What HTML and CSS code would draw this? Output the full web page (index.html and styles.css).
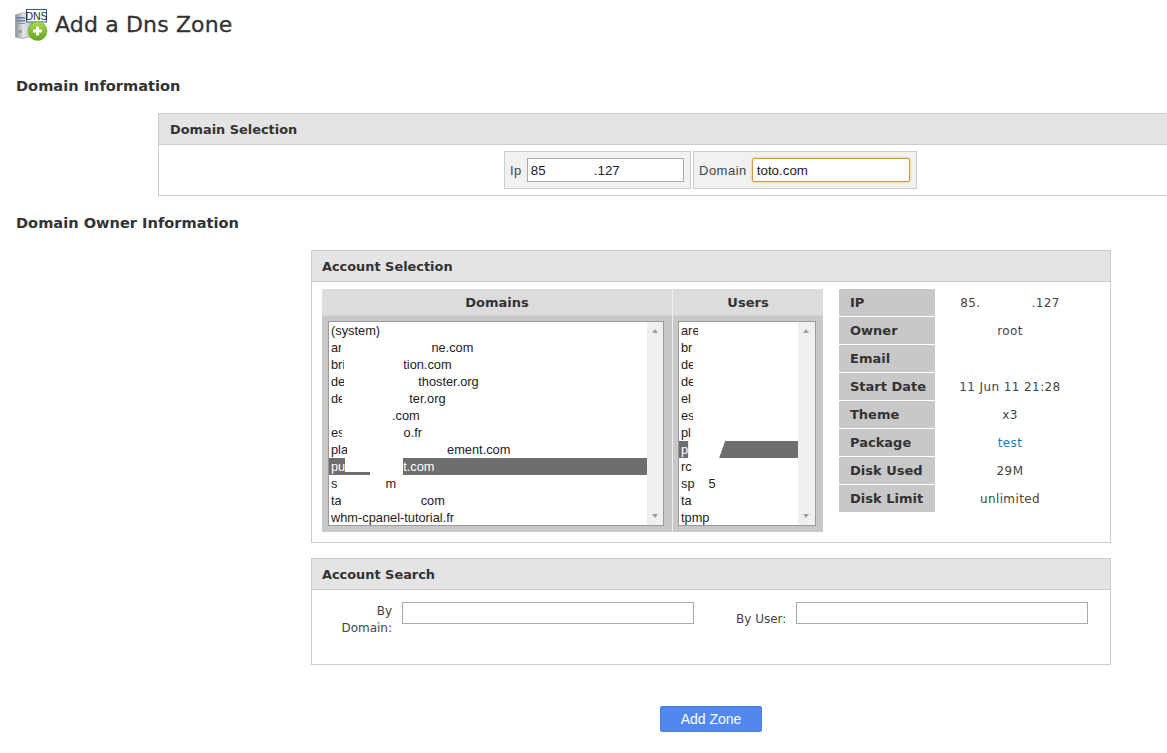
FILE: index.html
```html
<!DOCTYPE html>
<html lang="en">
<head>
<meta charset="utf-8">
<title>Add a Dns Zone</title>
<link rel="stylesheet" href="styles.css">
</head>
<body>
<main class="page">
  <header class="title-row">
    <svg class="title-icon" width="33" height="32" viewBox="0 0 33 32">
      <defs>
        <linearGradient id="tower" x1="0" x2="1" y1="0" y2="0"><stop offset="0" stop-color="#8d9299"/><stop offset="0.45" stop-color="#e4e6ea"/><stop offset="1" stop-color="#b4b8bd"/></linearGradient>
        <linearGradient id="green" x1="0" x2="0" y1="0" y2="1"><stop offset="0" stop-color="#a9da4c"/><stop offset="1" stop-color="#5ea51b"/></linearGradient>
      </defs>
      <path d="M0.5 6 L7 4 H18 V27 L7 29.5 L0.5 28 Z" fill="url(#tower)" stroke="#8b8f95" stroke-width="0.6"/>
      <rect x="2" y="8" width="8" height="1.6" fill="#5b7fa8"/>
      <rect x="2" y="11" width="8" height="1.6" fill="#6f86a0"/>
      <rect x="2" y="14" width="8" height="1" fill="#8b939c"/>
      <rect x="3" y="21" width="4" height="3" fill="#9aa0a6"/>
      <rect x="11.5" y="0.5" width="20" height="12.5" fill="#fff" stroke="#2f5f9e"/>
      <text x="21.5" y="11" text-anchor="middle" class="icon-text">DNS</text>
      <circle cx="22.5" cy="22" r="9.5" fill="url(#green)" stroke="#6aa820" stroke-width="0.6"/>
      <path d="M22.5 17.5 V26.5 M18 22 H27" stroke="#fff" stroke-width="3"/>
    </svg>
    <h1 class="title">Add a Dns Zone</h1>
  </header>

  <h2 class="section first">Domain Information</h2>
  <section class="panel panel-domain">
    <h3 class="panel-head">Domain Selection</h3>
    <div class="domain-body">
      <label class="field field-ip">Ip <input class="text ip" type="text" value="85             .127"></label>
      <label class="field field-domain">Domain <input class="text focused" type="text" value="toto.com"></label>
    </div>
  </section>

  <h2 class="section second">Domain Owner Information</h2>
  <section class="panel panel-owner">
    <h3 class="panel-head inset">Account Selection</h3>
    <div class="account-body">
      <div class="picker">
        <div class="picker-col col-domains">
          <div class="picker-head">Domains</div>
          <div class="picker-well">
            <div class="listbox">
              <ul class="list">
                <li>(system)</li>
                <li>ar<span class="gap g1"></span>ne.com</li>
                <li>bri<span class="gap g2"></span>tion.com</li>
                <li>de<span class="gap g3"></span>thoster.org</li>
                <li>de<span class="gap g4"></span>ter.org</li>
                <li><span class="gap g5"></span>.com</li>
                <li>es<span class="gap g6"></span>o.fr</li>
                <li>pla<span class="gap g7"></span>ement.com</li>
                <li class="sel">pu<span class="cover c1"></span>t.com</li>
                <li>s<span class="gap g8"></span>m</li>
                <li>ta<span class="gap g9"></span>com</li>
                <li>whm-cpanel-tutorial.fr</li>
              </ul>
              <div class="scrollbar"><span class="arrow up"></span><span class="arrow down"></span></div>
            </div>
          </div>
        </div>
        <div class="picker-col col-users">
          <div class="picker-head">Users</div>
          <div class="picker-well">
            <div class="listbox">
              <ul class="list">
                <li>are<span class="gap mask"></span></li>
                <li>bri<span class="gap mask"></span></li>
                <li>de<span class="gap mask"></span></li>
                <li>de<span class="gap mask"></span></li>
                <li>el</li>
                <li>es<span class="gap mask"></span></li>
                <li>pl</li>
                <li class="sel">p<span class="cover c2"></span></li>
                <li>rc</li>
                <li>sp<span class="gap g10"></span>5</li>
                <li>ta</li>
                <li>tpmp</li>
              </ul>
              <div class="scrollbar"><span class="arrow up"></span><span class="arrow down"></span></div>
            </div>
          </div>
        </div>
      </div>
      <dl class="info">
        <div class="info-row"><dt>IP</dt><dd>85.<span class="gap g11"></span>.127</dd></div>
        <div class="info-row"><dt>Owner</dt><dd>root</dd></div>
        <div class="info-row"><dt>Email</dt><dd></dd></div>
        <div class="info-row"><dt>Start Date</dt><dd>11 Jun 11 21:28</dd></div>
        <div class="info-row"><dt>Theme</dt><dd>x3</dd></div>
        <div class="info-row"><dt>Package</dt><dd><a class="link" href="#">test</a></dd></div>
        <div class="info-row"><dt>Disk Used</dt><dd>29M</dd></div>
        <div class="info-row"><dt>Disk Limit</dt><dd>unlimited</dd></div>
      </dl>
    </div>
  </section>

  <section class="panel panel-search">
    <h3 class="panel-head inset">Account Search</h3>
    <div class="search-body">
      <label class="search-label label-domain" for="by-domain">By Domain:</label>
      <input class="text search-input" id="by-domain" type="text">
      <label class="search-label label-user" for="by-user">By User:</label>
      <input class="text search-input" id="by-user" type="text">
    </div>
  </section>

  <div class="actions"><button class="btn" type="button">Add Zone</button></div>
</main>
</body>
</html>
```
FILE: styles.css
```css
* { box-sizing: border-box; }
html, body { margin: 0; padding: 0; }
body {
  background: #fff;
  color: #333;
  font-family: "DejaVu Sans", Verdana, sans-serif;
  overflow: hidden;
  height: 753px;
}
.page { padding: 10px 0 0 16px; }
.title-row { display: flex; align-items: center; gap: 7px; height: 30px; }
.title-icon { flex: none; margin-left: -1px; }
.icon-text { font: 10.5px "Liberation Sans", Arial, sans-serif; fill: #1c2b4a; -webkit-text-stroke: 0.2px #1c2b4a; }
.title { margin: 0; font-size: 22px; font-weight: 400; color: #333; letter-spacing: 0.15px; line-height: 30px; -webkit-text-stroke: 0.3px #333; }
.section { margin: 0; font-size: 14.6px; font-weight: 700; line-height: 20px; color: #333; }
.section.first { padding-top: 36px; height: 73px; }
.section.second { margin-top: 17px; height: 37px; }

.panel { border: 1px solid #ccc; background: #fff; }
.panel-head {
  margin: 0;
  height: 31px;
  padding-left: 11px;
  background: #e4e4e4;
  border-bottom: 1px solid #ccc;
  font-size: 12.9px;
  font-weight: 700;
  line-height: 32px;
  color: #333;
}
.panel-head.inset { padding-left: 10px; }
.panel-domain { margin-left: 142px; width: 1030px; height: 83px; }
.panel-owner { margin-left: 295px; width: 800px; height: 293px; }
.panel-search { margin: 15px 0 0 295px; width: 800px; height: 107px; }

.domain-body { display: flex; justify-content: flex-start; gap: 2px; padding: 6px 0 0 345px; }
.field {
  display: flex;
  align-items: center;
  gap: 5px;
  height: 38px;
  padding: 0 5px;
  background: #f1f1f1;
  border: 1px solid #ccc;
  font: 13px "Liberation Sans", Arial, sans-serif;
  letter-spacing: 0.5px;
  color: #444;
}
.field-ip { width: 187px; }
.field-domain { width: 224px; }
.text {
  height: 24px;
  border: 1px solid #aaa;
  background: #fff;
  padding: 1px 3px;
  font: 13.33px "Liberation Sans", Arial, sans-serif;
  color: #222;
  outline: none;
}
.ip { width: 157px; }
.focused { width: 158px; padding-left: 4px; border-color: #d39a3a; border-radius: 2px; box-shadow: 0 0 2px #e5a83a; color: #222; }

.account-body { display: flex; gap: 16px; padding: 7px 0 0 10px; }
.picker { display: flex; width: 501px; height: 243px; }
.picker-col { display: flex; flex-direction: column; }
.col-domains { width: 350px; }
.col-users { width: 151px; border-left: 1px solid #eee; }
.picker-head {
  height: 27px;
  background: #dcdcdc;
  border-bottom: 1px solid #d4d4d4;
  text-align: center;
  font-size: 13px;
  font-weight: 700;
  line-height: 28px;
  color: #333;
}
.picker-well { flex: 1; background: #c8c8c8; padding: 5px 8px 5px 6px; }
.col-users .picker-well { padding: 5px 7px 5px 5px; }
.listbox { display: flex; height: 205px; background: #fff; border: 1px solid #9a9a9a; overflow: hidden; }
.list {
  flex: 1;
  min-width: 0;
  margin: 0;
  padding: 0;
  list-style: none;
  font: 12.8px "Liberation Sans", Arial, sans-serif;
  color: #222;
}
.list li { height: 17px; line-height: 17px; padding-left: 2px; white-space: nowrap; }
.list .sel { background: #6e6e6e; color: #fff; }
.gap { display: inline-block; height: 15px; margin-left: -1px; background: #fff; vertical-align: top; }
.mask { width: 8px; margin-left: -2px; }
.g1 { width: 90px; }
.g2 { width: 59px; }
.g3 { width: 74px; }
.g4 { width: 67px; margin-left: -3px; }
.g5 { width: 61px; margin-left: 0; }
.g6 { width: 62px; margin-left: -3px; }
.g7 { width: 100px; }
.g8 { width: 48px; margin-left: 0; }
.g9 { width: 80px; }
.g10 { width: 14px; margin-left: 0; }
.g11 { width: 53px; margin-left: -2px; }
.cover { display: inline-block; height: 17px; vertical-align: top; }
.c1 { width: 58px; background: linear-gradient(#6e6e6e, #6e6e6e) no-repeat 0 100% / 25px 3px, #fff; }
.c2 { width: 37px; background: #fff; clip-path: polygon(0 0, 100% 0, calc(100% - 6px) 100%, 0 100%); }
.scrollbar { position: relative; flex: none; width: 17px; background: #f0f0f0; }
.col-domains .scrollbar { width: 16px; }
.arrow { position: absolute; left: 5px; width: 0; height: 0; border-left: 3.5px solid transparent; border-right: 3.5px solid transparent; }
.arrow.up { top: 7px; border-bottom: 4px solid #a0a0a0; }
.arrow.down { bottom: 7px; border-top: 4px solid #a0a0a0; }

.info { margin: 0; width: 246px; }
.info-row { display: flex; height: 28px; }
.info dt {
  width: 96px;
  padding-left: 11px;
  background: #c8c8c8;
  border-bottom: 1px solid #fff;
  font-size: 13px;
  font-weight: 700;
  line-height: 27px;
  color: #333;
}
.info dd { flex: 1; margin: 0; text-align: center; font-size: 12px; line-height: 29px; letter-spacing: 0.4px; color: #444; }
.link { color: #1f7bb5; text-decoration: none; }

.search-body { display: flex; align-items: flex-start; padding: 12px 0 0 0; }
.search-label { font-size: 12px; color: #444; text-align: right; line-height: 17px; }
.label-domain { width: 80px; margin: 1px 10px 0 0; padding-left: 20px; }
.label-user { width: 50px; margin: 9px 10px 0 42px; white-space: nowrap; }
.search-input { width: 292px; height: 22px; }

.actions { display: flex; padding: 41px 0 0 644px; }
.btn {
  width: 102px;
  height: 26px;
  padding: 0;
  background: #5088ee;
  border: 1px solid #4a7fdc;
  border-radius: 2px;
  font: 14px "Liberation Sans", Arial, sans-serif;
  color: #fff;
}
```
